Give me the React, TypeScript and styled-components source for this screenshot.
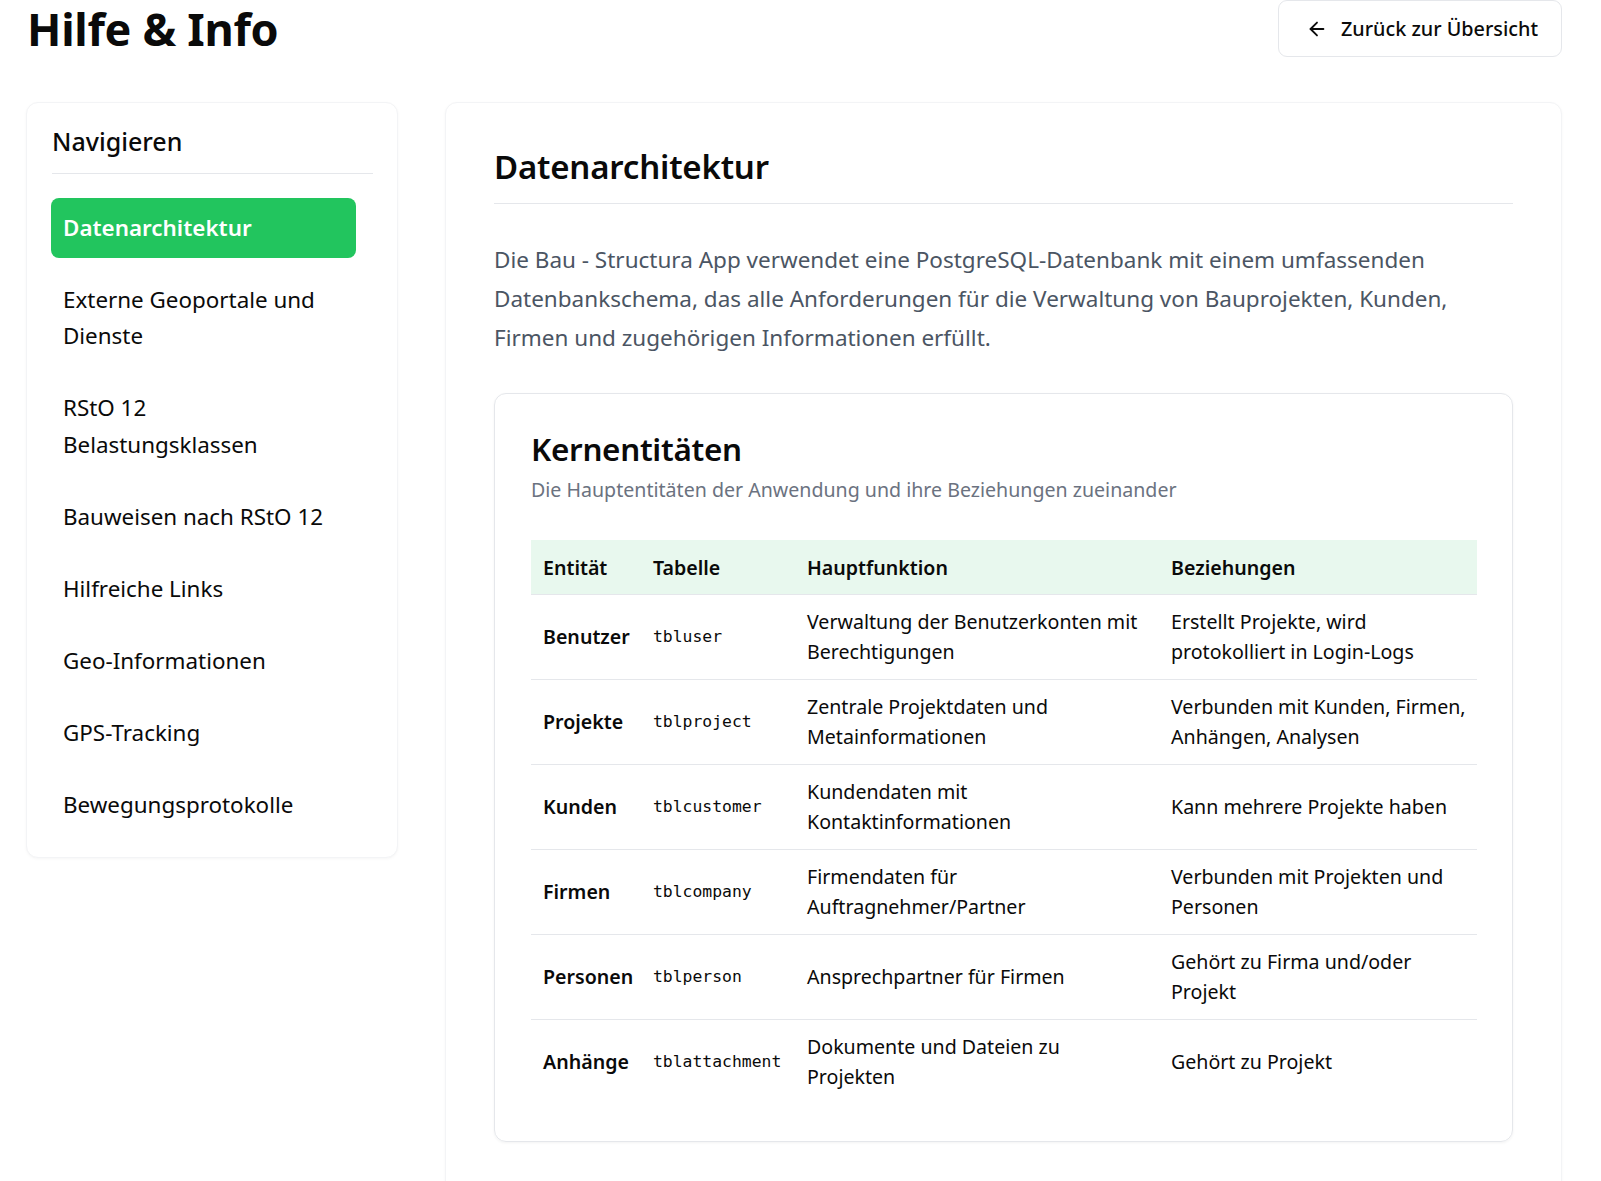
import React from "react";
import styled, { createGlobalStyle } from "styled-components";

const GlobalStyle = createGlobalStyle`
  html, body { margin: 0; padding: 0; background: #ffffff; }
  body {
    font-family: "Noto Sans", "Open Sans", sans-serif;
    color: #0a0a0a;
    -webkit-font-smoothing: antialiased;
  }
  * { box-sizing: border-box; }
`;

const Page = styled.div`
  padding: 0 39px 0 26px;
  width: 1601px;
  height: 1181px;
  overflow: hidden;
`;

const Header = styled.header`
  display: flex;
  align-items: center;
  justify-content: space-between;
  height: 57px;
  padding-left: 1px;
`;

const Title = styled.h1`
  margin: 0;
  font-size: 45px;
  line-height: 54px;
  font-weight: 700;
  letter-spacing: -0.3px;
  color: #0a0a0a;
`;

const BackButton = styled.button`
  display: flex;
  align-items: center;
  gap: 13px;
  height: 57px;
  padding: 0 23px 0 27px;
  background: #fff;
  border: 1px solid #e5e7eb;
  border-radius: 9px;
  font-family: inherit;
  font-size: 19.8px;
  font-weight: 500;
  color: #0a0a0a;
  cursor: pointer;
`;

const Layout = styled.div`
  display: grid;
  grid-template-columns: 372px 1117px;
  gap: 47px;
  margin-top: 45px;
  align-items: start;
`;

const Card = styled.div`
  background: #fff;
  border: 1px solid #f3f4f6;
  border-radius: 12px;
  box-shadow: 0 1px 3px rgba(0, 0, 0, 0.04);
`;

const Sidebar = styled(Card)`
  padding: 18px 24px 22px 24px;
`;

const SideTitle = styled.h2`
  margin: 0 0 0 1px;
  font-size: 25px;
  font-weight: 500;
  line-height: 40px;
  padding-bottom: 12px;
  border-bottom: 1px solid #e5e7eb;
`;

const NavList = styled.nav`
  display: flex;
  flex-direction: column;
  gap: 12.5px;
  margin-top: 24px;
  width: 305px;
`;

const NavItem = styled.a<{ $active?: boolean }>`
  display: block;
  padding: 11.5px 22px 11.5px 12px;
  border-radius: 8px;
  font-size: 22.4px;
  line-height: 36.5px;
  font-weight: ${(p) => (p.$active ? 600 : 400)};
  color: ${(p) => (p.$active ? "#ffffff" : "#0a0a0a")};
  background: ${(p) => (p.$active ? "#22c55e" : "transparent")};
  text-decoration: none;
  cursor: pointer;
`;

const Main = styled(Card)`
  padding: 38px 48px 48px 48px;
  min-height: 1100px;
`;

const SectionTitle = styled.h2`
  margin: 0;
  font-size: 33px;
  font-weight: 600;
  line-height: 52px;
  padding-bottom: 10px;
  border-bottom: 1px solid #e5e7eb;
  letter-spacing: -0.2px;
`;

const Lead = styled.p`
  margin: 36px 0 0;
  font-size: 22.5px;
  line-height: 39px;
  color: #4b5563;
`;

const InnerCard = styled.div`
  margin-top: 36px;
  border: 1px solid #e5e7eb;
  border-radius: 12px;
  box-shadow: 0 1px 3px rgba(0, 0, 0, 0.05);
  padding: 33px 36px 36px 36px;
`;

const CardTitle = styled.h3`
  margin: 0;
  font-size: 31.4px;
  font-weight: 600;
  line-height: 44px;
  letter-spacing: -0.3px;
`;

const CardSub = styled.p`
  margin: 4px 0 0;
  font-size: 19.6px;
  line-height: 30px;
  color: #6b7280;
`;

const Table = styled.table`
  margin-top: 35px;
  width: 100%;
  border-collapse: collapse;
  table-layout: fixed;
`;

const Th = styled.th<{ $w: number }>`
  width: ${(p) => p.$w}px;
  text-align: left;
  font-size: 19.6px;
  font-weight: 600;
  padding: 11px 4px 10px 12px;
  line-height: 33px;
  background: #e8f8ee;
  border-bottom: 1px solid #e5e7eb;
`;

const Tr = styled.tr`
  border-bottom: 1px solid #e5e7eb;
  &:last-child { border-bottom: none; }
`;

const Td = styled.td<{ $bold?: boolean }>`
  padding: 12px 4px 12px 12px;
  font-size: 19.6px;
  line-height: 30px;
  height: 85px;
  vertical-align: middle;
  font-weight: ${(p) => (p.$bold ? 600 : 400)};
  &:nth-child(3) { padding-right: 16px; }
`;

const CodeTd = styled(Td)`
  font-family: "DejaVu Sans Mono", "Liberation Mono", monospace;
  font-size: 16.4px;
`;

const ArrowIcon = () => (
  <svg width="22" height="22" viewBox="0 0 24 24" fill="none" stroke="currentColor" strokeWidth="2" strokeLinecap="round" strokeLinejoin="round">
    <path d="m12 19-7-7 7-7" />
    <path d="M19 12H5" />
  </svg>
);

const navItems = [
  "Datenarchitektur",
  "Externe Geoportale und Dienste",
  "RStO 12 Belastungsklassen",
  "Bauweisen nach RStO 12",
  "Hilfreiche Links",
  "Geo-Informationen",
  "GPS-Tracking",
  "Bewegungsprotokolle",
];

const rows = [
  ["Benutzer", "tbluser", "Verwaltung der Benutzerkonten mit Berechtigungen", "Erstellt Projekte, wird protokolliert in Login-Logs"],
  ["Projekte", "tblproject", "Zentrale Projektdaten und Metainformationen", "Verbunden mit Kunden, Firmen, Anhängen, Analysen"],
  ["Kunden", "tblcustomer", "Kundendaten mit Kontaktinformationen", "Kann mehrere Projekte haben"],
  ["Firmen", "tblcompany", "Firmendaten für Auftragnehmer/Partner", "Verbunden mit Projekten und Personen"],
  ["Personen", "tblperson", "Ansprechpartner für Firmen", "Gehört zu Firma und/oder Projekt"],
  ["Anhänge", "tblattachment", "Dokumente und Dateien zu Projekten", "Gehört zu Projekt"],
];

export default function App() {
  return (
    <>
      <GlobalStyle />
      <Page>
        <Header>
          <Title>Hilfe &amp; Info</Title>
          <BackButton>
            <ArrowIcon />
            Zurück zur Übersicht
          </BackButton>
        </Header>
        <Layout>
          <Sidebar>
            <SideTitle>Navigieren</SideTitle>
            <NavList>
              {navItems.map((n, i) => (
                <NavItem key={n} $active={i === 0}>
                  {n}
                </NavItem>
              ))}
            </NavList>
          </Sidebar>
          <Main>
            <SectionTitle>Datenarchitektur</SectionTitle>
            <Lead>
              Die Bau - Structura App verwendet eine PostgreSQL-Datenbank mit einem umfassenden
              Datenbankschema, das alle Anforderungen für die Verwaltung von Bauprojekten, Kunden,
              Firmen und zugehörigen Informationen erfüllt.
            </Lead>
            <InnerCard>
              <CardTitle>Kernentitäten</CardTitle>
              <CardSub>Die Hauptentitäten der Anwendung und ihre Beziehungen zueinander</CardSub>
              <Table>
                <thead>
                  <tr>
                    <Th $w={110}>Entität</Th>
                    <Th $w={154}>Tabelle</Th>
                    <Th $w={364}>Hauptfunktion</Th>
                    <Th $w={318}>Beziehungen</Th>
                  </tr>
                </thead>
                <tbody>
                  {rows.map((r) => (
                    <Tr key={r[0]}>
                      <Td $bold>{r[0]}</Td>
                      <CodeTd>{r[1]}</CodeTd>
                      <Td>{r[2]}</Td>
                      <Td>{r[3]}</Td>
                    </Tr>
                  ))}
                </tbody>
              </Table>
            </InnerCard>
          </Main>
        </Layout>
      </Page>
    </>
  );
}
